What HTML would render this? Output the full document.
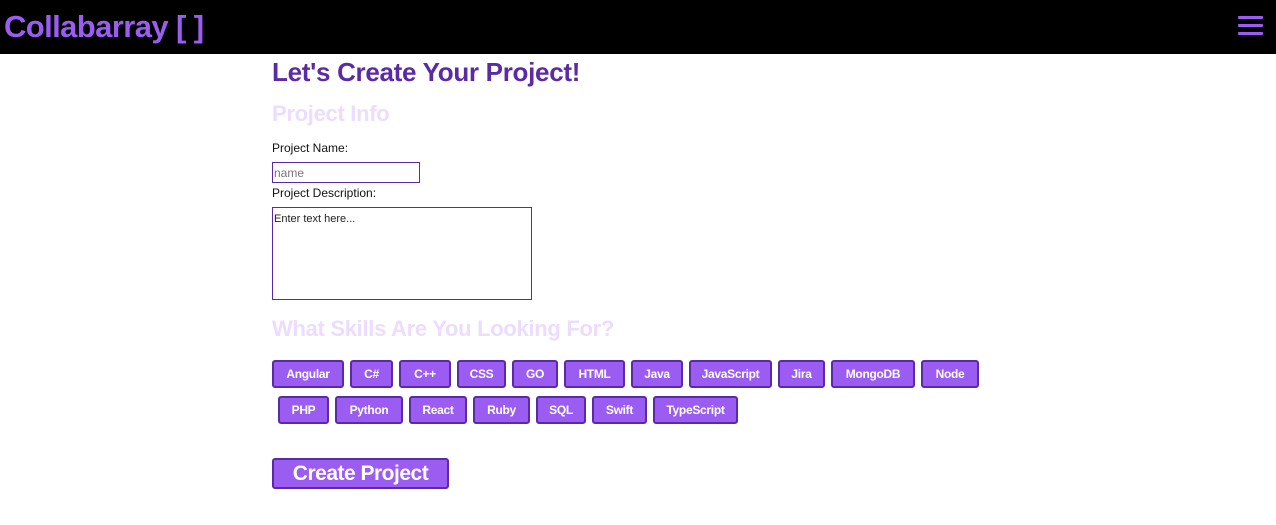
<!DOCTYPE html>
<html><head><meta charset="utf-8"><style>
*{margin:0;padding:0;box-sizing:border-box}
body{width:1276px;height:525px;background:#fff;font-family:"Liberation Sans",sans-serif;position:relative;overflow:hidden}
.nav{position:absolute;left:0;top:0;width:1276px;height:54px;background:#000}
.logo{position:absolute;left:4px;top:9px;color:#9b5cf2;font-weight:bold;font-size:31px;letter-spacing:-0.6px}
.ham{position:absolute;left:1238px;top:16px;width:25px}
.ham div{height:3px;background:#9b5cf2;margin-bottom:5px;border-radius:1px}
.a{position:absolute;white-space:nowrap}
h1{position:absolute;left:272px;top:57px;font-size:26px;color:#5b2aa6;letter-spacing:-0.3px}
.sub{color:#ecdcfd;font-weight:bold;font-size:22px;letter-spacing:-0.3px}
.lbl{font-size:12px;color:#111}
.inp{position:absolute;border:1px solid #5b2aa6;background:#fff;font-size:12px;color:#777;padding:3px 1px}
.b{position:absolute;height:28px;background:#9b5cf2;border:2px solid #5b2aa6;border-radius:3px;color:#fff;font-weight:bold;font-size:12px;display:flex;align-items:center;justify-content:center;letter-spacing:-0.3px}
</style></head><body>
<div class="nav"><div class="logo">Collabarray [ ]</div><div class="ham"><div></div><div></div><div></div></div></div>
<h1>Let's Create Your Project!</h1>
<div class="a sub" style="left:272px;top:101px">Project Info</div>
<div class="a lbl" style="left:272px;top:141px">Project Name:</div>
<div class="inp" style="left:272px;top:162px;width:148px;height:21px;padding-top:3px">name</div>
<div class="a lbl" style="left:272px;top:186px">Project Description:</div>
<div class="inp" style="left:272px;top:207px;width:260px;height:93px;color:#222;font-size:11px;padding-top:5px">Enter text here...</div>
<div class="a sub" style="left:272px;top:316px">What Skills Are You Looking For?</div>
<div class="b" style="left:272px;top:360px;width:72px">Angular</div>
<div class="b" style="left:350px;top:360px;width:43px">C#</div>
<div class="b" style="left:399px;top:360px;width:52px">C++</div>
<div class="b" style="left:457px;top:360px;width:49px">CSS</div>
<div class="b" style="left:512px;top:360px;width:46px">GO</div>
<div class="b" style="left:564px;top:360px;width:61px">HTML</div>
<div class="b" style="left:631px;top:360px;width:52px">Java</div>
<div class="b" style="left:689px;top:360px;width:83px">JavaScript</div>
<div class="b" style="left:778px;top:360px;width:47px">Jira</div>
<div class="b" style="left:831px;top:360px;width:84px">MongoDB</div>
<div class="b" style="left:921px;top:360px;width:58px">Node</div>
<div class="b" style="left:278px;top:396px;width:51px">PHP</div>
<div class="b" style="left:335px;top:396px;width:68px">Python</div>
<div class="b" style="left:409px;top:396px;width:58px">React</div>
<div class="b" style="left:473px;top:396px;width:57px">Ruby</div>
<div class="b" style="left:536px;top:396px;width:50px">SQL</div>
<div class="b" style="left:592px;top:396px;width:55px">Swift</div>
<div class="b" style="left:653px;top:396px;width:85px">TypeScript</div>
<div class="b" style="left:272px;top:458px;width:177px;height:31px;font-size:21px;letter-spacing:-0.5px">Create Project</div>
</body></html>
